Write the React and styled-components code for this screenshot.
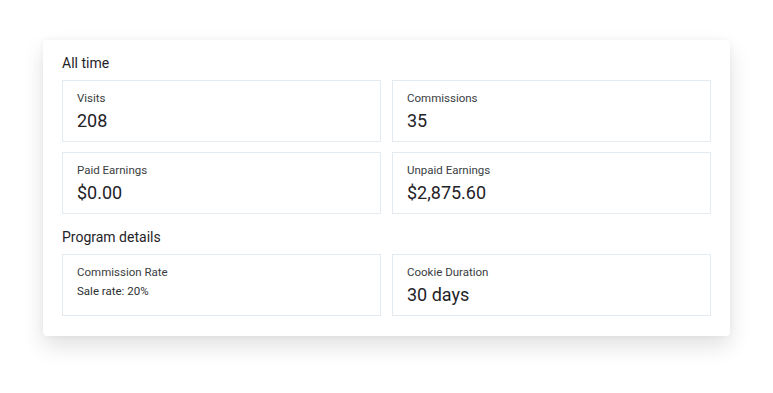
import React from "react";
import styled, { createGlobalStyle } from "styled-components";

const GlobalStyle = createGlobalStyle`
  html, body {
    margin: 0;
    padding: 0;
    background: #ffffff;
    font-family: Roboto, "Noto Sans", "Liberation Sans", sans-serif;
    -webkit-font-smoothing: antialiased;
  }
`;

const Page = styled.div`
  width: 773px;
  height: 393px;
  padding: 40px 43px 0 43px;
  box-sizing: border-box;
`;

const Card = styled.section`
  width: 687px;
  box-sizing: border-box;
  background: #ffffff;
  border-radius: 4px;
  padding: 13px 19px 20px 19px;
  box-shadow: 0 10px 22px rgba(0, 0, 0, 0.12), 0 0 6px rgba(0, 0, 0, 0.04);
`;

const Heading = styled.h2`
  margin: ${(p) => (p.$first ? "0" : "13px")} 0 7px 0;
  font-size: 14px;
  line-height: 20px;
  font-weight: 400;
  color: #1f2328;
`;

const Grid = styled.div`
  display: grid;
  grid-template-columns: 1fr 1fr;
  gap: 10px 11px;
`;

const Stat = styled.div`
  border: 1px solid #e3eaf0;
  padding: 9px 14px 8px 14px;
  height: 62px;
  box-sizing: border-box;
  display: flex;
  flex-direction: column;
  gap: 3px;
`;

const Label = styled.div`
  font-size: 11.5px;
  line-height: 16px;
  color: #3a3d42;
`;

const Value = styled.div`
  font-size: 18px;
  line-height: 24px;
  color: #1f2328;
`;

const Note = styled.div`
  font-size: 11.5px;
  line-height: 16px;
  color: #2c2f33;
`;

const allTime = [
  { label: "Visits", value: "208" },
  { label: "Commissions", value: "35" },
  { label: "Paid Earnings", value: "$0.00" },
  { label: "Unpaid Earnings", value: "$2,875.60" },
];

export default function App() {
  return (
    <>
      <GlobalStyle />
      <Page>
        <Card>
          <Heading $first>All time</Heading>
          <Grid>
            {allTime.map((s) => (
              <Stat key={s.label}>
                <Label>{s.label}</Label>
                <Value>{s.value}</Value>
              </Stat>
            ))}
          </Grid>
          <Heading>Program details</Heading>
          <Grid>
            <Stat>
              <Label>Commission Rate</Label>
              <Note>Sale rate: 20%</Note>
            </Stat>
            <Stat>
              <Label>Cookie Duration</Label>
              <Value>30 days</Value>
            </Stat>
          </Grid>
        </Card>
      </Page>
    </>
  );
}
